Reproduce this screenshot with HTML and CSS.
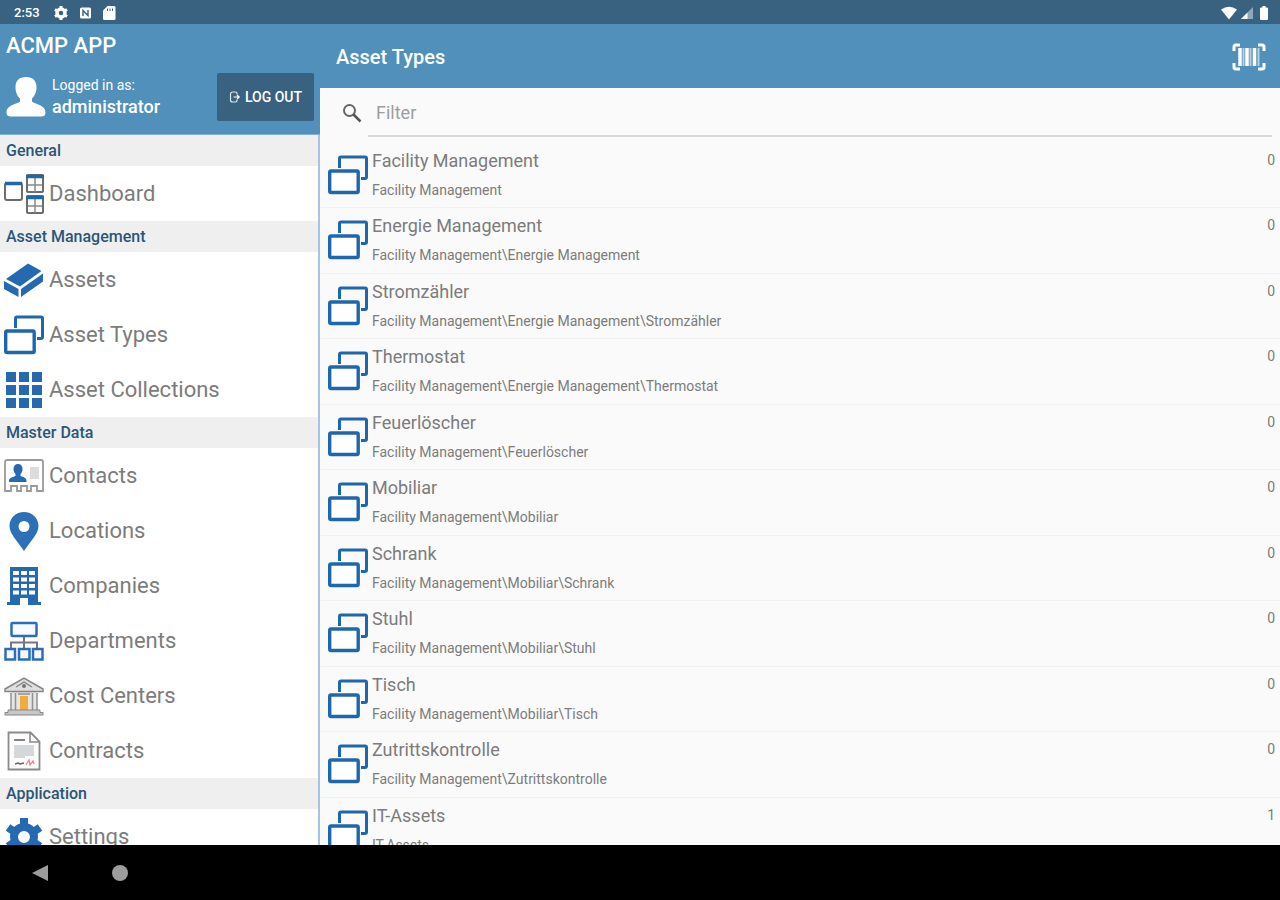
FILE: index.html
```html
<!DOCTYPE html>
<html lang="en">
<head>
    <meta charset="UTF-8">
    <meta name="viewport" content="width=device-width, initial-scale=1.0">
    <title>ACMP App - Asset Types</title>
    <link rel="stylesheet" href="styles.css">
</head>
<body>
    <!-- shared icon, used in the sidebar and in every list row -->
    <svg class="sprite" aria-hidden="true">
        <symbol id="icon-types" viewBox="0 0 40 40">
            <path d="M11.500 13V3.500a1.500 1.500 0 0 1 1.500-1.500h24a1.500 1.500 0 0 1 1.500 1.500v18.500a1.500 1.500 0 0 1-1.500 1.500H33" fill="none" stroke="#1f67ad" stroke-width="3"/>
            <rect x="1.700" y="16" width="28.500" height="21.500" rx="1.500" fill="#fff" stroke="#1f67ad" stroke-width="3.400"/>
        </symbol>
    </svg>

    <div class="status-bar">
        <span class="clock">2:53</span>
        <svg class="status-icon" viewBox="0 0 16 16">
            <circle cx="8" cy="8" r="4" fill="none" stroke="#fff" stroke-width="3.400"/>
            <path d="M8 1v3M8 12v3M2 4.500l2.500 1.500M11.500 10l2.500 1.500M2 11.500L4.500 10M11.500 6L14 4.500" stroke="#fff" stroke-width="3"/>
        </svg>
        <svg class="status-icon" viewBox="0 0 16 16">
            <rect x="3" y="2.500" width="11" height="11" rx="1.500" fill="#fff"/>
            <path d="M6 11V5.500l5 5V5" fill="none" stroke="#396180" stroke-width="1.400"/>
        </svg>
        <svg class="status-icon" viewBox="0 0 16 16">
            <path d="M6.500 1H13a1.500 1.500 0 0 1 1.500 1.500v11A1.500 1.500 0 0 1 13 15H3.500A1.500 1.500 0 0 1 2 13.500v-8z" fill="#fff"/>
            <path d="M6.500 3.500v2.500M9 3.500v2.500M11.500 3.500v2.500" stroke="#396180" stroke-width="1"/>
        </svg>
        <div class="status-right">
            <svg class="wifi" viewBox="0 0 16 14">
                <path d="M8 13.500L0 3.500Q8-2 16 3.500z" fill="#fff"/>
            </svg>
            <svg class="signal" viewBox="0 0 12 12">
                <path d="M12 0v12H0z" fill="#8fa8ba"/>
                <path d="M6.500 5.500V12H0z" fill="#fff"/>
            </svg>
            <svg class="battery" viewBox="0 0 8 14">
                <path d="M2.500 0h3v1.500H7a1 1 0 0 1 1 1V13a1 1 0 0 1-1 1H1a1 1 0 0 1-1-1V2.500a1 1 0 0 1 1-1h1.500z" fill="#fff"/>
            </svg>
        </div>
    </div>

    <div class="app">
        <aside class="sidebar">
            <header class="user-header">
                <h1>ACMP APP</h1>
                <div class="user-row">
                    <svg class="avatar" viewBox="0 0 40 40">
                        <path d="M20 0c7 0 10.500 4 10.500 10 0 6-2 9-4.500 11.500v3c2 2.500 13.500 3 13.500 11 0 3-2 4-4 4h-31c-2 0-4-1-4-4 0-8 11.500-8.500 13.500-11v-3C11.500 19 9.500 16 9.500 10 9.500 4 13 0 20 0z" fill="#fff"/>
                    </svg>
                    <div class="user-info">
                        <div class="user-label">Logged in as:</div>
                        <div class="user-name">administrator</div>
                    </div>
                    <button class="logout" type="button">
                        <svg viewBox="0 0 12 12">
                            <path d="M8 3.500V2.500a1.500 1.500 0 0 0-1.500-1.500H3.500A2 2 0 0 0 1.500 3v6a2 2 0 0 0 2 2h3A1.500 1.500 0 0 0 8 9.500v-1" fill="none" stroke="#dfe8ee" stroke-width="1.200"/>
                            <path d="M4.500 6H10M8 4l2.200 2L8 8" fill="none" stroke="#fff" stroke-width="1.200"/>
                        </svg>
                        LOG OUT
                    </button>
                </div>
            </header>

            <nav class="menu">
                <h2>General</h2>
                <a href="#dashboard">
                    <svg viewBox="0 0 40 40">
                        <g fill="#fff" stroke="#6d6d6d" stroke-width="2">
                            <rect x="1" y="9" width="17" height="17" rx="2"/>
                            <rect x="23" y="1" width="16" height="17" rx="1"/>
                            <rect x="23" y="22" width="16" height="17" rx="1"/>
                        </g>
                        <path d="M31 4v14M24 11h14M31 25v14M24 32h14" stroke="#8a8a8a" stroke-width="1.500"/>
                        <path d="M1 9.500h17M22 2.500h18M22 23.500h18" stroke="#1f67ad" stroke-width="3.500"/>
                    </svg>
                    <span>Dashboard</span>
                </a>

                <h2>Asset Management</h2>
                <a href="#assets">
                    <svg viewBox="0 0 40 40">
                        <path d="M2 19L24 3.500l13.500 7.500L16 26.500z" fill="#2569b0"/>
                        <path d="M0 21l14.500 8v8L0 29zM17 29l22-15.500v8L17 37z" fill="#2569b0"/>
                    </svg>
                    <span>Assets</span>
                </a>
                <a href="#types">
                    <svg viewBox="0 0 40 40"><use href="#icon-types"/></svg>
                    <span>Asset Types</span>
                </a>
                <a href="#collections">
                    <svg viewBox="0 0 40 40">
                        <path d="M2 2h10v10H2zM15 2h10v10H15zM28 2h10v10H28zM2 15h10v10H2zM15 15h10v10H15zM28 15h10v10H28zM2 28h10v10H2zM15 28h10v10H15zM28 28h10v10H28z" fill="#2569b0"/>
                    </svg>
                    <span>Asset Collections</span>
                </a>

                <h2>Master Data</h2>
                <a href="#contacts">
                    <svg viewBox="0 0 40 40">
                        <path d="M3 4h34a2 2 0 0 1 2 2v29h-6v-5h-6v5h-4v-5h-6v5h-4v-5H7v5H1V6a2 2 0 0 1 2-2z" fill="#fff" stroke="#9a9a9a" stroke-width="1.800"/>
                        <path d="M14 8c3 0 4.500 2 4.500 5 0 2.500-1 4-2 5v2c2 1 6 1.500 6 4.500V26H5v-1.500c0-3 4.500-3.500 6.500-4.500v-2c-1-1-2-2.500-2-5 0-3 1.500-5 4.500-5z" fill="#2569b0"/>
                        <path d="M26 11h9v12h-9z" fill="#dcdcdc"/>
                    </svg>
                    <span>Contacts</span>
                </a>
                <a href="#locations">
                    <svg viewBox="0 0 40 40">
                        <path fill-rule="evenodd" d="M20 1c8 0 14.500 6 14.500 14 0 8-8 15-14.500 25C13.500 30 5.500 23 5.500 15 5.500 7 12 1 20 1zm0 9a5.500 5.500 0 1 0 0 11 5.500 5.500 0 0 0 0-11z" fill="#2e70b6"/>
                    </svg>
                    <span>Locations</span>
                </a>
                <a href="#companies">
                    <svg viewBox="0 0 40 40">
                        <path d="M6 1h28v35h3v3H3v-3h3z" fill="#2569b0"/>
                        <path d="M9 5h6v4H9zM17 5h6v4h-6zM25 5h6v4h-6zM9 11.500h6v4H9zM17 11.500h6v4h-6zM25 11.500h6v4h-6zM9 18h6v4H9zM17 18h6v4h-6zM25 18h6v4h-6zM9 24.500h6v4H9zM17 24.500h6v4h-6zM25 24.500h6v4h-6zM16 32h8v7h-8z" fill="#fff"/>
                    </svg>
                    <span>Companies</span>
                </a>
                <a href="#departments">
                    <svg viewBox="0 0 40 40">
                        <path d="M20 15v12M7 27v-5.500h26V27" fill="none" stroke="#777" stroke-width="2"/>
                        <g fill="#f7f9fc" stroke="#2b6eb5" stroke-width="2.500">
                            <rect x="7.500" y="2" width="25" height="13" rx="1"/>
                            <rect x="1.500" y="28" width="9.500" height="10.500"/>
                            <rect x="15" y="28" width="10.500" height="10.500"/>
                            <rect x="29" y="28" width="9.500" height="10.500"/>
                        </g>
                    </svg>
                    <span>Departments</span>
                </a>
                <a href="#costcenters">
                    <svg viewBox="0 0 40 40">
                        <path d="M7 16h26v19H7z" fill="#e5e5e5"/>
                        <path d="M1 13L20 2l19 11v2.500H1z" fill="#dedede" stroke="#858585" stroke-width="1.500"/>
                        <path d="M12 11l8-5 8 5" fill="none" stroke="#858585" stroke-width="1.300"/>
                        <circle cx="20" cy="10" r="2" fill="#777"/>
                        <path d="M7 17v17M11.500 17v17M28.500 17v17M33 17v17M14 18h12" stroke="#919191" stroke-width="1.500"/>
                        <path d="M16 20h8v14h-8z" fill="#f2ac3d"/>
                        <path d="M4 34h32v2.500h3V39H1v-2.500h3z" fill="#c8c8c8" stroke="#858585"/>
                    </svg>
                    <span>Cost Centers</span>
                </a>
                <a href="#contracts">
                    <svg viewBox="0 0 40 40">
                        <path d="M4.500 1.500h22l9 9v28h-31z" fill="#fcfcfc" stroke="#8a8a8a" stroke-width="1.800"/>
                        <path d="M26 2v9h9" fill="none" stroke="#8a8a8a" stroke-width="1.600"/>
                        <path d="M10 9h11" stroke="#777" stroke-width="1.800"/>
                        <path d="M10 14h20v11h-9v2H10z" fill="#d5d8d9"/>
                        <path d="M11 33l3-1 2 1 4-1" fill="none" stroke="#666" stroke-width="1.500"/>
                        <path d="M22 34l3-5 1 5 3-4 1 3" fill="none" stroke="#e58a92" stroke-width="1.300"/>
                    </svg>
                    <span>Contracts</span>
                </a>

                <h2>Application</h2>
                <a href="#settings">
                    <svg viewBox="0 0 40 40">
                        <circle cx="20" cy="20" r="10" fill="none" stroke="#2569b0" stroke-width="8"/>
                        <path d="M20 1v7M20 32v7M4 10.500l6 4M30 25.500l6 4M4 29.500l6-4M30 14.500l6-4" stroke="#2569b0" stroke-width="8"/>
                    </svg>
                    <span>Settings</span>
                </a>
            </nav>
        </aside>

        <main class="content">
            <header class="page-header">
                <h2>Asset Types</h2>
                <button class="scan" type="button" aria-label="Scan barcode">
                    <svg viewBox="0 0 34 28">
                        <path d="M2 8V4a2 2 0 0 1 2-2h4M26 2h4a2 2 0 0 1 2 2v4M32 20v4a2 2 0 0 1-2 2h-4M8 26H4a2 2 0 0 1-2-2v-4" fill="none" stroke="#fff" stroke-width="3"/>
                        <path d="M8 5v18M15 5v18M22.500 5v18" stroke="#fff" stroke-width="3.500"/>
                        <path d="M11.500 5v18M18.500 5v18M26.500 5v18" stroke="#b6d0e5" stroke-width="2"/>
                    </svg>
                </button>
            </header>

            <div class="filter">
                <label for="filterInput" aria-label="Filter">
                    <svg viewBox="0 0 20 20">
                        <circle cx="7.500" cy="7.500" r="5.500" fill="none" stroke="#666" stroke-width="2"/>
                        <path d="M11.500 11.500l7 7" stroke="#555" stroke-width="2.500"/>
                    </svg>
                </label>
                <input type="text" id="filterInput" placeholder="Filter">
            </div>

            <ul class="type-list">
                <li>
                    <svg><use href="#icon-types"/></svg>
                    <div class="type-text">
                        <h3>Facility Management</h3>
                        <p>Facility Management</p>
                    </div>
                    <span class="count">0</span>
                </li>
                <li>
                    <svg><use href="#icon-types"/></svg>
                    <div class="type-text">
                        <h3>Energie Management</h3>
                        <p>Facility Management\Energie Management</p>
                    </div>
                    <span class="count">0</span>
                </li>
                <li>
                    <svg><use href="#icon-types"/></svg>
                    <div class="type-text">
                        <h3>Stromzähler</h3>
                        <p>Facility Management\Energie Management\Stromzähler</p>
                    </div>
                    <span class="count">0</span>
                </li>
                <li>
                    <svg><use href="#icon-types"/></svg>
                    <div class="type-text">
                        <h3>Thermostat</h3>
                        <p>Facility Management\Energie Management\Thermostat</p>
                    </div>
                    <span class="count">0</span>
                </li>
                <li>
                    <svg><use href="#icon-types"/></svg>
                    <div class="type-text">
                        <h3>Feuerlöscher</h3>
                        <p>Facility Management\Feuerlöscher</p>
                    </div>
                    <span class="count">0</span>
                </li>
                <li>
                    <svg><use href="#icon-types"/></svg>
                    <div class="type-text">
                        <h3>Mobiliar</h3>
                        <p>Facility Management\Mobiliar</p>
                    </div>
                    <span class="count">0</span>
                </li>
                <li>
                    <svg><use href="#icon-types"/></svg>
                    <div class="type-text">
                        <h3>Schrank</h3>
                        <p>Facility Management\Mobiliar\Schrank</p>
                    </div>
                    <span class="count">0</span>
                </li>
                <li>
                    <svg><use href="#icon-types"/></svg>
                    <div class="type-text">
                        <h3>Stuhl</h3>
                        <p>Facility Management\Mobiliar\Stuhl</p>
                    </div>
                    <span class="count">0</span>
                </li>
                <li>
                    <svg><use href="#icon-types"/></svg>
                    <div class="type-text">
                        <h3>Tisch</h3>
                        <p>Facility Management\Mobiliar\Tisch</p>
                    </div>
                    <span class="count">0</span>
                </li>
                <li>
                    <svg><use href="#icon-types"/></svg>
                    <div class="type-text">
                        <h3>Zutrittskontrolle</h3>
                        <p>Facility Management\Zutrittskontrolle</p>
                    </div>
                    <span class="count">0</span>
                </li>
                <li>
                    <svg><use href="#icon-types"/></svg>
                    <div class="type-text">
                        <h3>IT-Assets</h3>
                        <p>IT-Assets</p>
                    </div>
                    <span class="count">1</span>
                </li>
            </ul>
        </main>
    </div>

    <div class="system-nav">
        <button type="button" aria-label="Back">
            <svg viewBox="0 0 16 16"><path d="M16 0v16L0 8z" fill="#9c9c9c"/></svg>
        </button>
        <button type="button" aria-label="Home">
            <svg viewBox="0 0 16 16"><circle cx="8" cy="8" r="8" fill="#9c9c9c"/></svg>
        </button>
    </div>
</body>
</html>
```
FILE: styles.css
```css
* {
    margin: 0;
    padding: 0;
    box-sizing: border-box;
}

body {
    font-family: Roboto, "Liberation Sans", sans-serif;
    background: #fafafa;
    color: #7c7c7c;
    height: 100vh;
    display: flex;
    flex-direction: column;
    overflow: hidden;
}

svg {
    display: block;
    flex-shrink: 0;
}

button {
    font-family: inherit;
    border: none;
    background: none;
    cursor: pointer;
}

.sprite {
    position: absolute;
    width: 0;
    height: 0;
}

/* Status bar */
.status-bar {
    height: 24px;
    flex-shrink: 0;
    background: #396180;
    color: white;
    display: flex;
    align-items: center;
    gap: 8px;
    padding: 1px 12px 0 14px;
}

.clock {
    font-size: 13px;
    font-weight: 500;
    margin-right: 5px;
}

.status-icon {
    width: 16px;
    height: 16px;
}

.status-right {
    margin-left: auto;
    display: flex;
    align-items: center;
    gap: 4px;
}

.wifi {
    width: 16px;
    height: 14px;
}

.signal {
    width: 12px;
    height: 12px;
}

.battery {
    width: 8px;
    height: 14px;
    margin-left: 3px;
}

.app {
    flex: 1;
    min-height: 0;
    display: flex;
}

/* Sidebar */
.sidebar {
    width: 25%;
    min-width: 320px;
    display: flex;
    flex-direction: column;
    background: white;
    border-right: 2px solid #a5c4e2;
}

.user-header {
    background: #5190bb;
    color: white;
    padding: 8px 4px 13px 6px;
    margin-right: -2px;
    border-bottom: 1px solid #85b1d0;
}

.user-header h1 {
    font-size: 22px;
    line-height: 28px;
    font-weight: 500;
}

.user-row {
    display: flex;
    align-items: center;
    padding-top: 13px;
}

.avatar {
    width: 40px;
    height: 40px;
}

.user-info {
    flex: 1;
    padding-left: 6px;
}

.user-label {
    font-size: 14px;
    line-height: 20px;
}

.user-name {
    font-size: 18px;
    line-height: 24px;
    font-weight: 500;
}

.logout {
    display: flex;
    align-items: center;
    gap: 4px;
    height: 48px;
    padding: 0 12px;
    margin-right: 2px;
    background: #396180;
    border-radius: 2px;
    color: white;
    font-size: 14px;
    font-weight: 500;
}

.logout svg {
    width: 12px;
    height: 12px;
}

.menu {
    flex: 1;
    min-height: 0;
    overflow-y: auto;
    scrollbar-width: none;
}

.menu h2 {
    background: #efefef;
    color: #2b5575;
    font-size: 16px;
    line-height: 31px;
    font-weight: 500;
    padding-left: 6px;
}

.menu a {
    display: flex;
    align-items: center;
    gap: 5px;
    height: 55px;
    padding-left: 4px;
    color: #7c7c7c;
    font-size: 22px;
    text-decoration: none;
}

.menu svg {
    width: 40px;
    height: 40px;
}

/* Content */
.content {
    flex: 1;
    min-width: 0;
    display: flex;
    flex-direction: column;
}

.page-header {
    height: 64px;
    flex-shrink: 0;
    background: #5190bb;
    color: white;
    display: flex;
    align-items: center;
    justify-content: space-between;
    padding: 2px 14px 0 16px;
}

.page-header h2 {
    font-size: 20px;
    font-weight: 500;
}

.scan svg {
    width: 34px;
    height: 28px;
}

.filter {
    display: flex;
    align-items: center;
    padding: 0 8px 0 22px;
}

.filter label {
    width: 26px;
}

.filter svg {
    width: 20px;
    height: 20px;
}

.filter input {
    flex: 1;
    height: 49px;
    padding: 2px 8px 0;
    border: none;
    border-bottom: 2px solid #d9d9d9;
    background: none;
    outline: none;
    font-family: inherit;
    font-size: 18px;
    color: #7c7c7c;
}

.filter input::placeholder {
    color: #9e9e9e;
}

.type-list {
    list-style: none;
    flex: 1;
    min-height: 0;
    overflow-y: auto;
    scrollbar-width: none;
    padding-top: 6px;
}

.type-list li {
    display: flex;
    height: 65px;
    padding: 6px 5px 0 8px;
    border-bottom: 1px solid #f1f1f1;
}

.type-list li:nth-child(even) {
    height: 66px;
}

.type-list svg {
    width: 40px;
    height: 40px;
    margin-top: 6px;
}

.type-text {
    flex: 1;
    padding-left: 4px;
}

.type-text h3 {
    font-size: 18px;
    line-height: 24px;
    font-weight: 400;
}

.type-text p {
    font-size: 14px;
    line-height: 20px;
    padding-top: 7px;
}

.count {
    font-size: 14px;
    line-height: 22px;
}

/* Android navigation bar */
.system-nav {
    height: 55px;
    flex-shrink: 0;
    background: black;
    display: flex;
    align-items: center;
    gap: 64px;
    padding-left: 32px;
}

.system-nav svg {
    width: 16px;
    height: 16px;
}
```
